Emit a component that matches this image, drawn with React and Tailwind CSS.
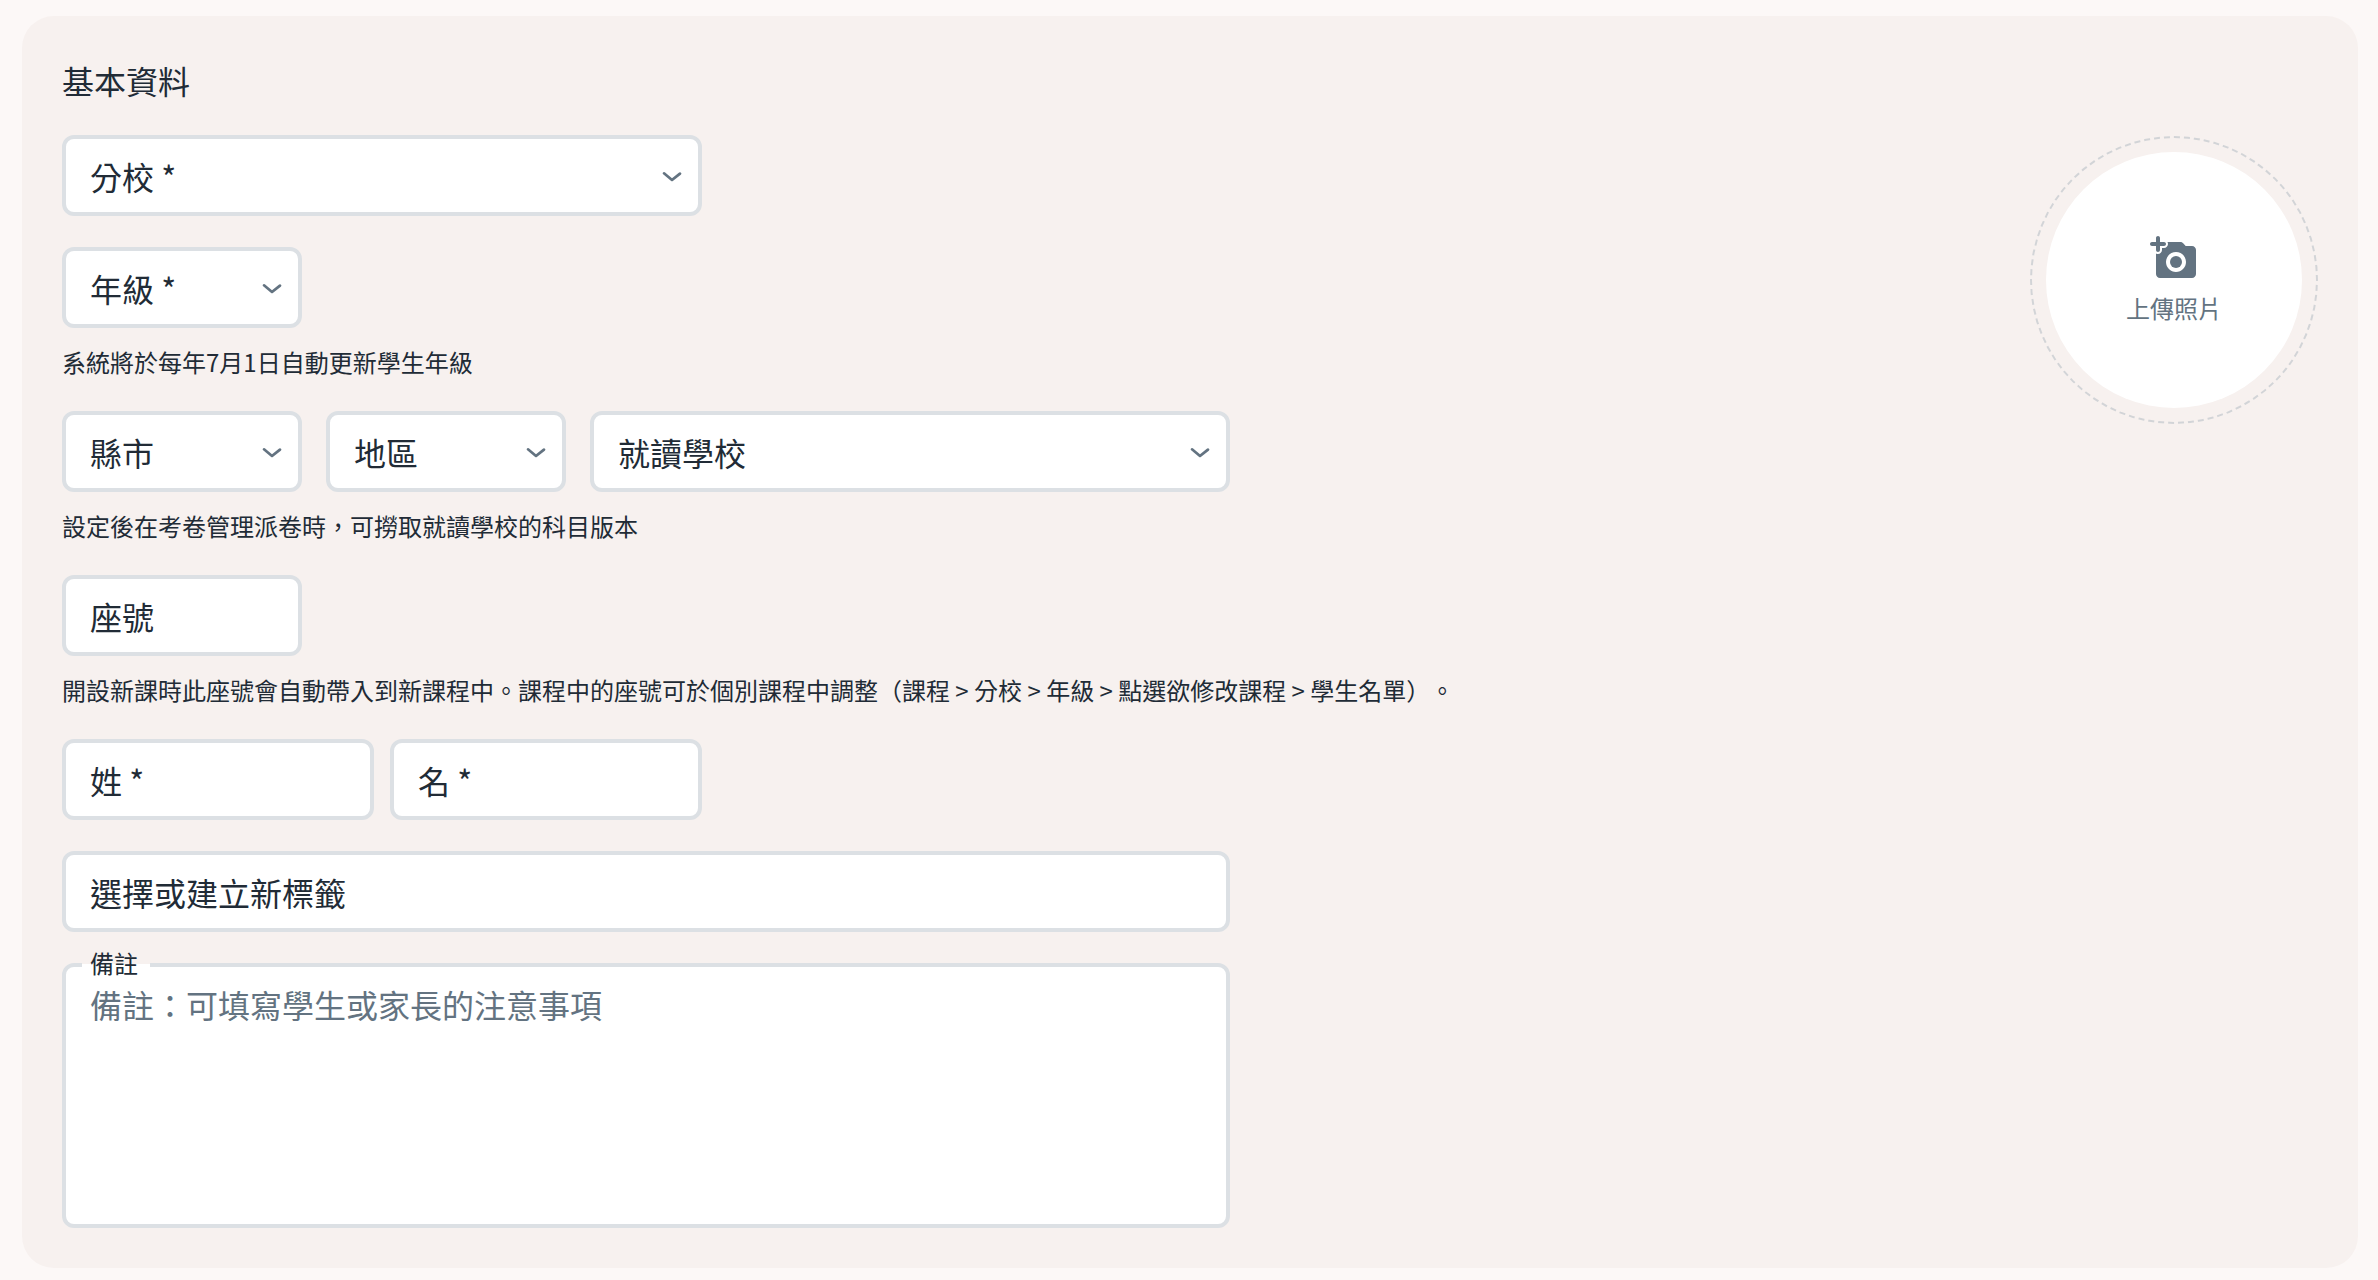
import React, { useState } from "react";

const ChevronIcon = () => (
  <svg
    viewBox="0 0 24 24"
    className="pointer-events-none absolute right-[14px] top-0 bottom-0 my-auto h-8 w-8 fill-[#637381]"
    aria-hidden="true"
  >
    <path d="M12 16a1 1 0 0 1-.64-.23l-6-5a1 1 0 1 1 1.28-1.54L12 13.71l5.36-4.32a1 1 0 0 1 1.41.15a1 1 0 0 1-.14 1.46l-6 4.83A1 1 0 0 1 12 16z" />
  </svg>
);

const AddPhotoIcon = () => (
  <svg viewBox="0 0 24 24" className="h-12 w-12 fill-current" aria-hidden="true">
    <path d="M3 8c0 .55.45 1 1 1s1-.45 1-1V6h2c.55 0 1-.45 1-1s-.45-1-1-1H5V2c0-.55-.45-1-1-1s-1 .45-1 1v2H1c-.55 0-1 .45-1 1s.45 1 1 1h2v2z" />
    <circle cx="13" cy="14" r="3" />
    <path d="M21 6h-3.17l-1.24-1.35c-.37-.41-.91-.65-1.47-.65h-6.4c.17.3.28.63.28 1 0 1.1-.9 2-2 2H6v1c0 1.1-.9 2-2 2-.37 0-.7-.11-1-.28V20c0 1.1.9 2 2 2h16c1.1 0 2-.9 2-2V8c0-1.1-.9-2-2-2zm-8 13c-2.76 0-5-2.24-5-5s2.24-5 5-5 5 2.24 5 5-2.24 5-5 5z" />
  </svg>
);

const fieldClass =
  "block h-[81px] w-full rounded-xl border-4 border-[#dce0e4] bg-white pl-6 text-[32px] leading-[46px] text-[#212b36] outline-none placeholder:text-[#212b36] placeholder:opacity-100 focus:border-[#637381]";

const SelectField = ({ label, className }) => (
  <div className={`relative ${className}`}>
    <select
      aria-label={label}
      defaultValue=""
      className={`${fieldClass} appearance-none pr-14`}
    >
      <option value="">{label}</option>
    </select>
    <ChevronIcon />
  </div>
);

const TextField = ({ label, className }) => (
  <div className={className}>
    <input
      type="text"
      aria-label={label}
      placeholder={label}
      className={`${fieldClass} pr-6`}
    />
  </div>
);

const HelperText = ({ children }) => (
  <p className="mt-4 text-2xl leading-9">{children}</p>
);

export default function App() {
  const [note, setNote] = useState("");

  return (
    <main className="min-h-screen bg-[#fcf8f7] pt-4 pr-5 pb-3 pl-[22px] font-['Noto_Sans_CJK_TC',sans-serif] text-[#212b36] [text-spacing-trim:space-all]">
      <section className="rounded-[32px] bg-[#f7f1ef] p-10">
        <h2 className="text-[32px] leading-[48px] font-normal">基本資料</h2>

        <div className="mt-[31px] flex items-start justify-between">
          <form className="flex flex-1 flex-col gap-[31px]">
            <SelectField label="分校 *" className="w-[640px]" />

            <div>
              <SelectField label="年級 *" className="w-60" />
              <HelperText>系統將於每年7月1日自動更新學生年級</HelperText>
            </div>

            <div>
              <div className="flex gap-6">
                <SelectField label="縣市" className="w-60" />
                <SelectField label="地區" className="w-60" />
                <SelectField label="就讀學校" className="w-[640px]" />
              </div>
              <HelperText>
                設定後在考卷管理派卷時，可撈取就讀學校的科目版本
              </HelperText>
            </div>

            <div>
              <TextField label="座號" className="w-60" />
              <HelperText>
                開設新課時此座號會自動帶入到新課程中。課程中的座號可於個別課程中調整（課程
                &gt; 分校 &gt; 年級 &gt; 點選欲修改課程 &gt; 學生名單）。
              </HelperText>
            </div>

            <div className="flex gap-4">
              <TextField label="姓 *" className="w-[312px]" />
              <TextField label="名 *" className="w-[312px]" />
            </div>

            <TextField label="選擇或建立新標籤" className="w-[1168px]" />

            <div className="relative w-[1168px]">
              {/* the label sits in a notch cut out of the top border */}
              <label
                htmlFor="note"
                className="absolute -top-[18px] left-5 pr-3 pl-2 text-2xl leading-9"
              >
                <span className="absolute inset-x-0 top-[18px] h-[5px] border-t border-[#f7f1ef] bg-white" />
                <span className="relative">備註</span>
              </label>
              <textarea
                id="note"
                value={note}
                onChange={(e) => setNote(e.target.value)}
                placeholder="備註：可填寫學生或家長的注意事項"
                className="block h-[265px] w-full resize-none rounded-xl border-4 border-[#dce0e4] bg-white px-6 py-[14px] text-[32px] leading-[46px] outline-none placeholder:text-[#637381] placeholder:opacity-100 focus:border-[#637381]"
              />
            </div>
          </form>

          <div className="mt-px shrink-0 rounded-full border-2 border-dashed border-[#d2d4d7] p-[14px]">
            <button
              type="button"
              className="flex h-64 w-64 flex-col items-center justify-center gap-2 rounded-full bg-white text-2xl leading-9 text-[#637381]"
            >
              <AddPhotoIcon />
              上傳照片
            </button>
          </div>
        </div>
      </section>
    </main>
  );
}
